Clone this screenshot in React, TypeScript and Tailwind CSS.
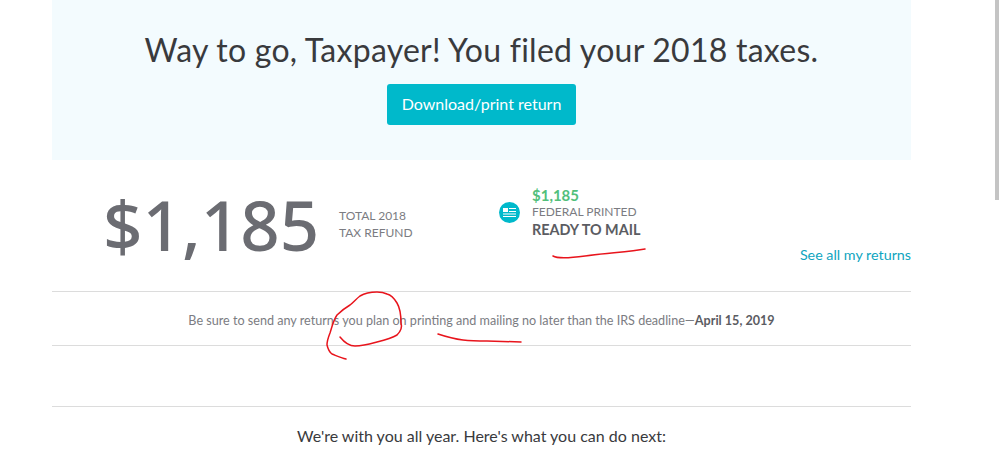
const font = { fontFamily: "Lato, 'Noto Sans', sans-serif" };
const numberFont = { fontFamily: "'Noto Sans', Lato, sans-serif" };

function Annotations() {
  return (
    <svg className="absolute left-0 top-0 pointer-events-none" width="999" height="449" fill="none" stroke="#e8141c" strokeWidth="1.5" strokeLinecap="round" strokeLinejoin="round">
      <path d="M553 256 C558 259 570 258 585 256 C605 253 630 252 645 249" />
      <path d="M340 337 C344 342 348 346 355 346 C364 346 370 344 377 342 C385 340 392 338 397 335 C402 330 402 326 401 323 C401 314 400 308 397 303 C394 298 391 295 387 294 C383 292 380 292 377 292 C370 292 365 293 360 296 C356 299 354 302 350 305 C345 308 341 311 337 315 C333 321 332 327 330 333 C328 338 327 341 327 345 C328 349 329 352 332 354 C337 356 341 358 346 359" />
      <path d="M438 334 C447 337 455 339 463 340 C472 341 480 341 487 341 L521 342" />
    </svg>
  );
}

export default function App() {
  return (
    <div className="relative w-[999px] h-[449px] overflow-hidden bg-white" style={font}>
      <div className="ml-[52px] w-[859px]">
        <div className="h-[160px] bg-[#f3fbfe] flex flex-col items-center pt-[30px]">
          <h1 className="text-[32px] leading-[40px] text-[#393a3d] tracking-[0.25px]">Way to go, Taxpayer! You filed your 2018 taxes.</h1>
          <button className="mt-[14px] w-[189px] h-[41px] rounded-[3px] bg-[#00b9cb] text-white text-[16px] pb-[2px]">Download/print return</button>
        </div>

        <div className="relative h-[131px] border-b border-[#dcdcdc] box-content -mb-px">
          <div className="flex">
            <div className="ml-[51px] mt-[24px] w-[218px] text-[69px] leading-[80px] font-medium text-[#6b6c72] whitespace-nowrap" style={numberFont}>$1,185</div>
            <div className="ml-[18px] mt-[47px] w-[68px] text-[12px] leading-[17px] text-[#7b7c82] whitespace-nowrap">
              <div>TOTAL 2018</div>
              <div>TAX REFUND</div>
            </div>
            <div className="ml-[92px] flex items-center">
              <div className="w-[21px] h-[21px] rounded-full bg-[#00b9cb] flex items-center justify-center">
                <svg width="13" height="11" viewBox="0 0 13 11" fill="white">
                  <rect x="0" y="1" width="5" height="4" />
                  <rect x="6" y="1" width="7" height="1" />
                  <rect x="6" y="4" width="7" height="1" />
                  <rect x="0" y="6.5" width="13" height="1" />
                  <rect x="0" y="9" width="13" height="1" />
                </svg>
              </div>
              <div className="ml-[12px] mt-[2px]">
                <div className="text-[15px] leading-[16px] font-bold text-[#52bf7b]">$1,185</div>
                <div className="text-[12px] leading-[17px] text-[#7b7c82]">FEDERAL PRINTED</div>
                <div className="text-[14.4px] leading-[19px] font-bold text-[#5b5c62]">READY TO MAIL</div>
              </div>
            </div>
          </div>
          <a className="absolute right-0 top-[86px] text-[14.3px] leading-[18px] text-[#0ea5c0]">See all my returns</a>
        </div>

        <div className="h-[54px] mt-px border-b border-[#dcdcdc] flex items-center justify-center text-[12.6px] text-[#7b7c82] pt-[5px]">
          <span>Be sure to send any returns you plan on printing and mailing no later than the IRS deadline—<b className="text-[#5b5c62]">April 15, 2019</b></span>
        </div>

        <div className="h-[61px] border-b border-[#dcdcdc]" />

        <p className="mt-[19px] text-center text-[16px] leading-[20px] text-[#393a3d]">We're with you all year. Here's what you can do next:</p>
      </div>

      <div className="absolute right-0 top-0 w-[4px] h-[200px] bg-[#c4c4c4]" />
      <Annotations />
    </div>
  );
}
